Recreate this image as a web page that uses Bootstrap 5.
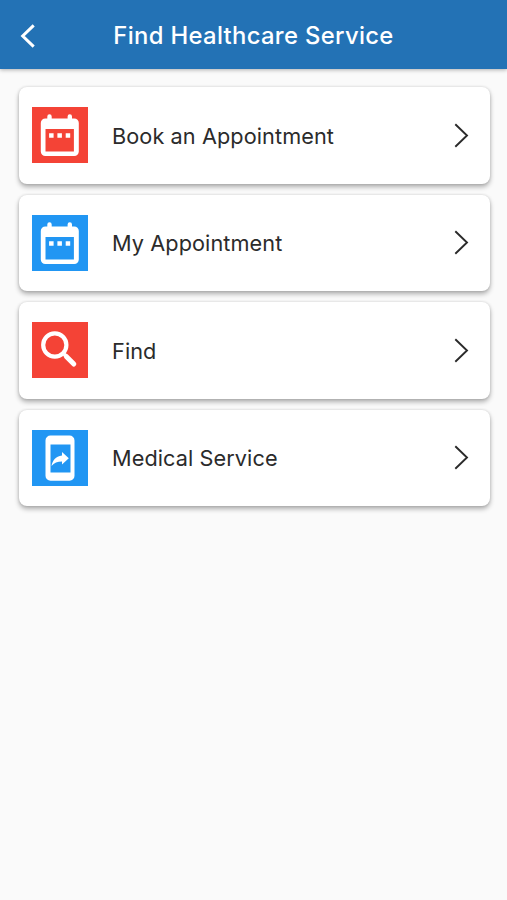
<!DOCTYPE html>
<html lang="en">
<head>
<meta charset="utf-8">
<meta name="viewport" content="width=device-width, initial-scale=1">
<title>Find Healthcare Service</title>
<link href="https://cdn.jsdelivr.net/npm/bootstrap@5.3.0/dist/css/bootstrap.min.css" rel="stylesheet">
<style>
body { font-family: Inter, "Liberation Sans", sans-serif; background: #fafafa; }
.app-bar { height: 69px; background: #2372b5; box-shadow: 0 1px 4px rgba(0,0,0,.3); padding: 2px 20px 0; }
.app-title { font-size: 23.8px; font-weight: 500; line-height: 30px; letter-spacing: .34px; white-space: nowrap; }
.service-list { padding: 18px 17.5px 24px 18.5px; gap: 11px; }
.service-item { height: 96.5px; border-radius: 8px; padding: 0 21px 0 13px; box-shadow: 0 3px 5px rgba(0,0,0,.3), 0 0 3px rgba(0,0,0,.14); color: #2b2b2b; }
.service-name { font-size: 21.7px; line-height: 30px; margin-left: 24.5px; letter-spacing: .08px; white-space: nowrap; padding-top: .5px; }
.tile-red { background: #f44336; }
.tile-blue { background: #2196f3; }
svg { display: block; }
</style>
</head>
<body class="d-flex flex-column min-vh-100">
<svg class="d-none">
  <symbol id="calendar" viewBox="0 0 56 56">
    <path fill="#fff" fill-rule="evenodd" d="M15.300 9.500a2.200 2.200 0 0 1 4.400 0v2h15.900v-2a2.200 2.200 0 0 1 4.400 0v2h2.300a4.500 4.500 0 0 1 4.500 4.500v28.500a4.500 4.500 0 0 1-4.500 4.500H13.300a4.500 4.500 0 0 1-4.500-4.500V16a4.500 4.500 0 0 1 4.500-4.500h2zM13.500 22v22.400h28.400V22z"/>
    <path fill="#fff" d="M17.100 26.200h4.500v4.500h-4.500zM25.400 26.200h4.500v4.500h-4.500zM33.700 26.200h4.500v4.500h-4.500z"/>
  </symbol>
  <symbol id="chevron" viewBox="0 0 15 25"><path d="M1.300 1.200 13 12.500 1.300 23.800" fill="none" stroke="#2b2b2b" stroke-width="1.900"/></symbol>
</svg>
<header class="app-bar d-flex align-items-center position-relative text-white">
  <svg width="16" height="24" viewBox="0 0 16 24" role="img" aria-label="Back"><path d="M13.700 1.400 2.700 12l11 10.600" fill="none" stroke="#fff" stroke-width="3"/></svg>
  <h1 class="app-title flex-grow-1 text-center mb-0 me-3">Find Healthcare Service</h1>
</header>
<main class="service-list d-flex flex-column flex-grow-1">
  <div class="service-item bg-white d-flex align-items-center">
    <svg class="tile-red" width="56" height="56"><use href="#calendar"/></svg>
    <span class="service-name">Book an Appointment</span>
    <svg class="ms-auto" width="15" height="25"><use href="#chevron"/></svg>
  </div>
  <div class="service-item bg-white d-flex align-items-center">
    <svg class="tile-blue" width="56" height="56"><use href="#calendar"/></svg>
    <span class="service-name">My Appointment</span>
    <svg class="ms-auto" width="15" height="25"><use href="#chevron"/></svg>
  </div>
  <div class="service-item bg-white d-flex align-items-center">
    <svg class="tile-red" width="56" height="56" viewBox="0 0 56 56" fill="none" stroke="#fff"><circle cx="22.800" cy="23" r="11.600" stroke-width="4.200"/><path d="m31 31 2.500 2.500" stroke-width="3.500"/><path d="m34.300 34.500 7.500 7.500" stroke-width="5" stroke-linecap="round"/></svg>
    <span class="service-name">Find</span>
    <svg class="ms-auto" width="15" height="25"><use href="#chevron"/></svg>
  </div>
  <div class="service-item bg-white d-flex align-items-center">
    <svg class="tile-blue" width="56" height="56" viewBox="0 0 56 56" fill="#fff"><path fill-rule="evenodd" d="M18.500 5.500h19a5 5 0 0 1 5 5v35.300a5 5 0 0 1-5 5h-19a5 5 0 0 1-5-5V10.500a5 5 0 0 1 5-5zM18.500 14.500v28h20v-28z"/><path d="M36.800 28.200 30 22v3.500c-6.500 1-9.500 5-10.500 10.500 2.500-3.300 6-4.600 10.500-4.600v3z"/></svg>
    <span class="service-name">Medical Service</span>
    <svg class="ms-auto" width="15" height="25"><use href="#chevron"/></svg>
  </div>
</main>
<script src="https://cdn.jsdelivr.net/npm/bootstrap@5.3.0/dist/js/bootstrap.bundle.min.js"></script>
</body>
</html>
